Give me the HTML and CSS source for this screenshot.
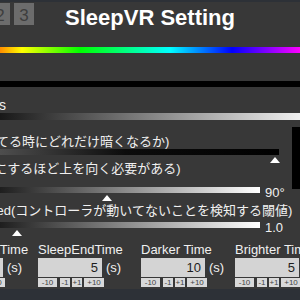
FILE: index.html
```html
<!DOCTYPE html>
<html lang="ja">
<head>
<meta charset="utf-8">
<title>SleepVR Setting</title>
<link rel="stylesheet" href="styles.css">
</head>
<body>
<div class="panel">
  <header class="header">
    <div class="tabs"><span class="tab">2</span><span class="tab">3</span></div>
    <h1 class="title">SleepVR Setting</h1>
    <div></div>
  </header>
  <div class="rainbow"></div>
  <div class="gap-row"></div>
  <div class="blackbar"></div>
  <div class="label label-s">s</div>
  <div class="graybar"></div>
  <div class="label jp jp1">てる時にどれだけ暗くなるか)</div>
  <div class="slider"><div class="track track-dark"><span class="thumb" style="left:98.4%"></span></div></div>
  <div class="label jp jp2">にするほど上を向く必要がある)</div>
  <div class="slider"><div class="track"><span class="thumb" style="left:41.3%"></span></div><span class="value">90°</span></div>
  <div class="label jp jp3">ed(コントローラが動いてないことを検知する閾値)</div>
  <div class="slider"><div class="track"><span class="thumb" style="left:6.5%"></span></div><span class="value">1.0</span></div>
  <div class="fields">
    <div class="field">
      <div class="field-label">SleepStartTime</div>
      <div class="field-row"><div class="num">5</div><span class="unit">(s)</span></div>
      <div class="steps"><span class="step s10">-10</span><span class="step s1">-1</span><span class="step s1 p1">+1</span><span class="step s10 p10">+10</span></div>
    </div>
    <div class="field">
      <div class="field-label">SleepEndTime</div>
      <div class="field-row"><div class="num">5</div><span class="unit">(s)</span></div>
      <div class="steps"><span class="step s10">-10</span><span class="step s1">-1</span><span class="step s1 p1">+1</span><span class="step s10 p10">+10</span></div>
    </div>
    <div class="field">
      <div class="field-label">Darker Time</div>
      <div class="field-row"><div class="num">10</div><span class="unit">(s)</span></div>
      <div class="steps"><span class="step s10">-10</span><span class="step s1">-1</span><span class="step s1 p1">+1</span><span class="step s10 p10">+10</span></div>
    </div>
    <div class="field">
      <div class="field-label">Brighter Time</div>
      <div class="field-row"><div class="num">5</div><span class="unit">(s)</span></div>
      <div class="steps"><span class="step s10">-10</span><span class="step s1">-1</span><span class="step s1 p1">+1</span><span class="step s10 p10">+10</span></div>
    </div>
  </div>
  <div class="preview"></div>
</div>
</body>
</html>
```
FILE: styles.css
```css
* { box-sizing: border-box; margin: 0; padding: 0; }
html, body { width: 300px; height: 300px; overflow: hidden; background: #2d3137; }
body { font-family: "Liberation Sans", "Noto Sans CJK JP", sans-serif; color: #f0f0f0; }

.panel { position: relative; margin-top: 2px; height: 287px; background: #383838; overflow: hidden; }

.header { height: 45px; padding-top: 1px; display: grid; grid-template-columns: 1fr auto 1fr; align-items: start; }
.tabs { display: flex; gap: 4px; margin-left: -10px; }
.tab { width: 20px; height: 22px; padding-top: 3px; background: #6c6c6c; color: #3e3e3e; font-size: 17px; line-height: 19px; text-align: center; }
.title { margin-top: 3px; font-size: 22px; font-weight: bold; line-height: 24px; color: #fff; white-space: nowrap; }

.rainbow { height: 6px; background: linear-gradient(to right, #ff8c00 0px, #ffff00 22px, #00ff00 80px, #00ffff 170px, #0000ff 232px, #ff00ff 300px); }
.gap-row { height: 28px; }
.blackbar { height: 6px; background: #000; }
.graybar { height: 7px; background: linear-gradient(to right, #181818, #efefef); }

.label { font-size: 14px; line-height: 16px; white-space: nowrap; }
.label-s { height: 26px; padding-top: 10px; margin-left: -1px; }
.jp { font-size: 13px; }
.jp1 { height: 29px; padding-top: 14px; margin-left: -4px; }
.jp2 { height: 32px; padding-top: 6px; margin-left: -6px; }
.jp3 { height: 29px; padding-top: 10px; margin-left: -3.5px; }

.slider { display: flex; height: 6px; }
.track { position: relative; flex: none; width: 260px; height: 6px; background: linear-gradient(to right, #1e1e1e, #ffffff); }
.track-dark { width: 279px; background: linear-gradient(to right, #4e4e4e, #0c0c0c 45%, #000); }
.value { margin-left: 5px; margin-top: -2px; font-size: 13px; line-height: 15px; }
.thumb { position: absolute; top: 8px; width: 0; height: 0; border-left: 5.5px solid transparent; border-right: 5.5px solid transparent; border-bottom: 6px solid #fff; transform: translateX(-50%); }

.fields { display: grid; grid-template-columns: 99px 103px 94px 100px; margin-left: -61px; margin-top: 14px; }
.field-label { height: 16px; font-size: 13px; line-height: 15px; white-space: nowrap; }
.field-row { display: flex; align-items: center; height: 19px; }
.num { width: 64px; height: 19px; padding-right: 4px; background: #d4d4d4; color: #1e1e1e; font-size: 13px; line-height: 19px; text-align: right; }
.unit { margin-left: 4px; font-size: 13px; line-height: 15px; }
.steps { display: flex; height: 9px; margin-top: 1px; }
.step { height: 9px; background: #d9d9d9; color: #444; font-size: 8px; line-height: 9px; text-align: center; }
.s10 { width: 19px; }
.s1 { width: 10px; margin-left: 3px; }
.p1 { margin-left: 2px; }
.p10 { width: 20px; margin-left: 2px; }

.preview { position: absolute; top: 125px; left: 292px; width: 20px; height: 62px; background: #000; }
```
